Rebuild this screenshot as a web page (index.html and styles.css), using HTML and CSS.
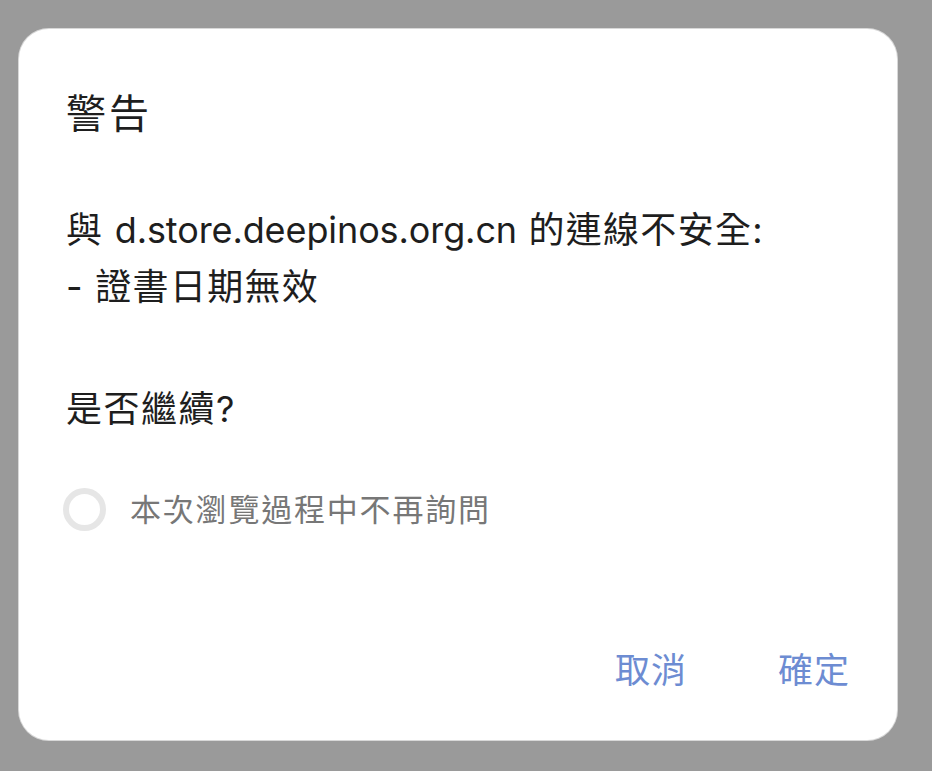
FILE: index.html
```html
<!DOCTYPE html>
<html lang="zh-Hant">
<head>
<meta charset="utf-8">
<title>警告</title>
<link rel="stylesheet" href="styles.css">
</head>
<body>
<div class="dialog">
  <div class="title">警告</div>
  <div class="message">
    <div>與 <span class="url">d.store.deepinos.org.cn</span> 的連線不安全:</div>
    <div>- 證書日期無效</div>
  </div>
  <div class="question">是否繼續?</div>
  <label class="check-row">
    <span class="radio"></span>
    <span class="check-label">本次瀏覽過程中不再詢問</span>
  </label>
  <div class="actions">
    <span class="btn">取消</span>
    <span class="btn">確定</span>
  </div>
</div>
</body>
</html>
```

FILE: styles.css
```css
html, body {
  margin: 0;
  padding: 0;
}
body {
  background: #9a9a9a;
  width: 932px;
  height: 771px;
  overflow: hidden;
  font-family: Inter, "Noto Sans CJK TC", sans-serif;
  padding-top: 29px;
  box-sizing: border-box;
}
.dialog {
  margin-left: 19px;
  width: 878px;
  height: 711px;
  box-sizing: border-box;
  background: #fff;
  border-radius: 30px;
  box-shadow: 0 0 0 1px #d8d8d8;
  padding: 57px 47px 0 47px;
  display: flex;
  flex-direction: column;
}
.title {
  font-size: 40px;
  line-height: 56px;
  color: #1e1e1e;
  letter-spacing: 3px;
}
.message {
  margin-top: 60px;
  font-size: 36px;
  line-height: 57px;
  color: #1e1e1e;
  letter-spacing: 1.3px;
}
.url {
  letter-spacing: -0.1px;
}
.question {
  margin-top: 65px;
  font-size: 36px;
  line-height: 57px;
  color: #1e1e1e;
  letter-spacing: 1.5px;
}
.check-row {
  margin-top: 50px;
  display: flex;
  align-items: center;
  gap: 24px;
  margin-left: -3px;
}
.radio {
  width: 43px;
  height: 43px;
  box-sizing: border-box;
  border: 6px solid #e6e6e6;
  border-radius: 50%;
  flex: none;
}
.check-label {
  font-size: 31px;
  line-height: 43px;
  color: #777;
  letter-spacing: 1.8px;
}
.actions {
  margin-top: 119px;
  display: flex;
  justify-content: flex-end;
  gap: 91px;
}
.btn {
  font-size: 35px;
  line-height: 40px;
  color: #6d8cd2;
  letter-spacing: 1px;
}
```
